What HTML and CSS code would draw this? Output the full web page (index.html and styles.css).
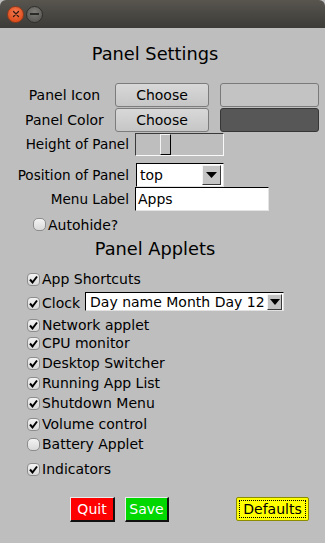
FILE: index.html
```html
<!DOCTYPE html>
<html>
<head>
<meta charset="utf-8">
<title>Panel Settings</title>
<link rel="stylesheet" href="styles.css">
</head>
<body>
<div class="window">
  <div class="titlebar">
    <span class="tb-btn tb-close">
      <svg width="8" height="8" viewBox="0 0 8 8"><path d="M1.5 1.5 L6.5 6.5 M6.5 1.5 L1.5 6.5" stroke="#3a1a10" stroke-width="1.3" stroke-linecap="round"/></svg>
    </span>
    <span class="tb-btn tb-min">
      <span class="tb-min-bar"></span>
    </span>
  </div>

  <div class="content">
    <h1 class="heading heading-main">Panel Settings</h1>

    <div class="settings">
      <div class="row row-pick">
        <span class="lbl lbl-pick">Panel Icon</span>
        <button class="btn-choose">Choose</button>
        <span class="swatch swatch-icon"></span>
      </div>
      <div class="row row-pick">
        <span class="lbl lbl-pick">Panel Color</span>
        <button class="btn-choose">Choose</button>
        <span class="swatch swatch-color"></span>
      </div>
      <div class="row row-scale">
        <span class="lbl lbl-wide">Height of Panel</span>
        <div class="scale"><span class="scale-handle"></span></div>
      </div>
      <div class="row row-pos">
        <span class="lbl lbl-wide">Position of Panel</span>
        <div class="optmenu optmenu-pos">
          <span class="optmenu-text">top</span>
          <span class="optmenu-arrow"><svg width="11" height="6" viewBox="0 0 11 6"><path d="M0 0 H11 L5.5 6 Z" fill="#000"/></svg></span>
        </div>
      </div>
      <div class="row row-menu">
        <span class="lbl lbl-wide">Menu Label</span>
        <div class="entry">Apps</div>
      </div>
      <div class="row row-auto">
        <span class="cb"></span>
        <span class="cb-text">Autohide?</span>
      </div>
    </div>

    <h2 class="heading heading-sub">Panel Applets</h2>

    <div class="applets">
      <div class="check-row gap-first"><span class="cb cb-on"><svg width="11" height="11" viewBox="0 0 11 11"><path d="M2 5.5 L4.5 8.5 L9 2.5" fill="none" stroke="#000" stroke-width="2"/></svg></span><span class="cb-text">App Shortcuts</span></div>
      <div class="check-row gap-lg row-clock"><span class="cb cb-on"><svg width="11" height="11" viewBox="0 0 11 11"><path d="M2 5.5 L4.5 8.5 L9 2.5" fill="none" stroke="#000" stroke-width="2"/></svg></span><span class="cb-text">Clock</span>
        <div class="optmenu optmenu-clock">
          <span class="optmenu-text">Day name Month Day 12</span>
          <span class="optmenu-arrow"><svg width="10" height="6" viewBox="0 0 10 6"><path d="M0 0 H10 L5 6 Z" fill="#000"/></svg></span>
        </div>
      </div>
      <div class="check-row gap-md"><span class="cb cb-on"><svg width="11" height="11" viewBox="0 0 11 11"><path d="M2 5.5 L4.5 8.5 L9 2.5" fill="none" stroke="#000" stroke-width="2"/></svg></span><span class="cb-text">Network applet</span></div>
      <div class="check-row gap-none"><span class="cb cb-on"><svg width="11" height="11" viewBox="0 0 11 11"><path d="M2 5.5 L4.5 8.5 L9 2.5" fill="none" stroke="#000" stroke-width="2"/></svg></span><span class="cb-text">CPU monitor</span></div>
      <div class="check-row"><span class="cb cb-on"><svg width="11" height="11" viewBox="0 0 11 11"><path d="M2 5.5 L4.5 8.5 L9 2.5" fill="none" stroke="#000" stroke-width="2"/></svg></span><span class="cb-text">Desktop Switcher</span></div>
      <div class="check-row"><span class="cb cb-on"><svg width="11" height="11" viewBox="0 0 11 11"><path d="M2 5.5 L4.5 8.5 L9 2.5" fill="none" stroke="#000" stroke-width="2"/></svg></span><span class="cb-text">Running App List</span></div>
      <div class="check-row"><span class="cb cb-on"><svg width="11" height="11" viewBox="0 0 11 11"><path d="M2 5.5 L4.5 8.5 L9 2.5" fill="none" stroke="#000" stroke-width="2"/></svg></span><span class="cb-text">Shutdown Menu</span></div>
      <div class="check-row gap-3"><span class="cb cb-on"><svg width="11" height="11" viewBox="0 0 11 11"><path d="M2 5.5 L4.5 8.5 L9 2.5" fill="none" stroke="#000" stroke-width="2"/></svg></span><span class="cb-text">Volume control</span></div>
      <div class="check-row"><span class="cb"></span><span class="cb-text">Battery Applet</span></div>
      <div class="check-row gap-lg2"><span class="cb cb-on"><svg width="11" height="11" viewBox="0 0 11 11"><path d="M2 5.5 L4.5 8.5 L9 2.5" fill="none" stroke="#000" stroke-width="2"/></svg></span><span class="cb-text">Indicators</span></div>
    </div>

    <div class="actions">
      <button class="act act-quit">Quit</button>
      <button class="act act-save">Save</button>
      <button class="act act-defaults"><span class="focus-ring">Defaults</span></button>
    </div>
  </div>
</div>
</body>
</html>
```

FILE: styles.css
```css
* { box-sizing: border-box; }
html, body { margin: 0; padding: 0; }
body {
  background: #bebebe;
  font-family: "DejaVu Sans", "Noto Sans", sans-serif;
  font-size: 14px;
  color: #000;
  width: 325px;
  height: 543px;
  overflow: hidden;
}

/* title bar */
.titlebar {
  height: 28px;
  background: linear-gradient(#58554f, #3c3b37);
  border-radius: 6px 6px 0 0;
  display: flex;
  align-items: center;
  padding-left: 7px;
  gap: 2px;
}
.tb-btn {
  width: 17px;
  height: 17px;
  border-radius: 50%;
  display: flex;
  align-items: center;
  justify-content: center;
}
.tb-close {
  background: radial-gradient(circle at 50% 35%, #f57a52, #e0501f 70%);
  border: 1px solid #8f3a1c;
}
.tb-min {
  background: radial-gradient(circle at 50% 35%, #7e7d78, #5d5c58 70%);
  border: 1px solid #2f2e2b;
}
.tb-min-bar {
  width: 9px;
  height: 1.5px;
  background: #2a2a28;
}

/* headings */
.heading {
  margin: 0;
  font-weight: normal;
  font-size: 17.8px;
  text-align: center;
  width: 310px;
}
.heading-main { height: 27px; line-height: 27px; margin-top: 12px; }
.heading-sub { height: 25px; line-height: 25px; margin-top: 1px; }

/* settings grid */
.settings { margin-top: 16px; }
.row { display: flex; align-items: center; }
.lbl { white-space: nowrap; }
.lbl-pick { width: 97px; margin-left: 16px; text-align: center; }
.lbl-wide { width: 130px; text-align: right; padding-right: 1px; font-size: 13.6px; }

.row-pick { height: 24px; margin-bottom: 1px; }
.btn-choose {
  margin-left: 2px;
  width: 94px;
  height: 24px;
  padding: 0;
  font: inherit;
  color: #000;
  background: linear-gradient(#d8d8d8, #c6c6c6);
  border: 1px solid #7c7c7c;
  border-radius: 3px;
}
.swatch {
  margin-left: 11px;
  width: 99px;
  height: 24px;
  border-radius: 3px;
}
.swatch-icon { background: #c3c3c3; border: 1px solid #7a7a7a; }
.swatch-color { background: #575757; border: 1px solid #363636; }

.row-scale { height: 24px; align-items: flex-start; }
.row-scale .lbl { line-height: 23px; }
.scale {
  margin-left: 5px;
  width: 89px;
  height: 23px;
  border-style: solid;
  border-width: 1px;
  border-color: #3a3a3a #fafafa #fafafa #3a3a3a;
  background: #bebebe;
  padding-left: 24px;
}
.scale-handle {
  display: block;
  width: 11px;
  height: 21px;
  border-style: solid;
  border-width: 1px;
  border-color: #f4f4f4 #000 #000 #f4f4f4;
  background: #bebebe;
}

.row-pos { height: 24px; margin-top: 6px; }
.optmenu {
  display: flex;
  align-items: center;
  background: #fff;
  border-style: solid;
  border-width: 1px;
  border-color: #000 #e2e2e2 #e2e2e2 #000;
}
.optmenu-pos { margin-left: 6px; width: 88px; height: 24px; padding-left: 3px; }
.optmenu-text { flex: 1; white-space: nowrap; }
.optmenu-arrow {
  display: flex;
  align-items: center;
  justify-content: center;
  background: #c4c4c4;
  border-style: solid;
  border-width: 1px;
  border-color: #f4f4f4 #3a3a3a #3a3a3a #f4f4f4;
}
.optmenu-pos .optmenu-arrow { width: 19px; height: 20px; margin-right: 2px; }

.row-menu { height: 24px; }
.entry {
  margin-left: 5px;
  width: 134px;
  height: 24px;
  line-height: 22px;
  background: #fff;
  padding-left: 2px;
  border-style: solid;
  border-width: 1px;
  border-color: #000 #e4e4e4 #e4e4e4 #000;
}

.row-auto { height: 21px; margin-top: 3px; padding-left: 33px; }

/* checkboxes */
.cb {
  width: 13px;
  height: 13px;
  border-radius: 5px;
  border: 1px solid #8d8d8d;
  background: linear-gradient(#f3f3f3, #d9d9d9);
  display: inline-flex;
  align-items: center;
  justify-content: center;
  flex: none;
}
.cb-on { border-radius: 4px; }
.cb-text { margin-left: 2px; white-space: nowrap; }

/* applets list */
.applets { display: flex; flex-direction: column; }
.check-row {
  height: 18px;
  display: flex;
  align-items: center;
  padding-left: 27px;
  margin-top: 2px;
}
.gap-first { margin-top: 9px; }
.gap-lg { margin-top: 6px; }
.gap-lg2 { margin-top: 7px; }
.gap-md { margin-top: 4px; }
.gap-none { margin-top: 0; }
.gap-3 { margin-top: 3px; }

.row-clock .optmenu-clock {
  margin-left: 5px;
  width: 199px;
  height: 19px;
  padding-left: 4px;
  font-size: 14px;
  margin-bottom: 3px;
}
.optmenu-clock .optmenu-arrow { width: 15px; height: 16px; margin-right: 1px; }

/* action buttons */
.actions {
  display: flex;
  margin-top: 19px;
  padding-left: 70px;
  align-items: flex-start;
}
.act {
  font: inherit;
  padding: 0;
  height: 25px;
  color: #fff;
  border-style: solid;
  border-width: 1px 2px 2px 1px;
  border-color: #ececec #111 #111 #ececec;
}
.act-quit { width: 45px; background: #ff0000; }
.act-save { width: 44px; margin-left: 10px; background: #00d800; }
.act-defaults {
  width: 73px;
  height: 24px;
  margin-left: 67px;
  background: #ffff00;
  color: #000;
  border: 1px solid #8c8c00;
  border-radius: 2px;
  padding: 2px;
}
.focus-ring {
  display: flex;
  align-items: center;
  justify-content: center;
  width: 100%;
  height: 100%;
  border: 1px dotted #000;
}
```
